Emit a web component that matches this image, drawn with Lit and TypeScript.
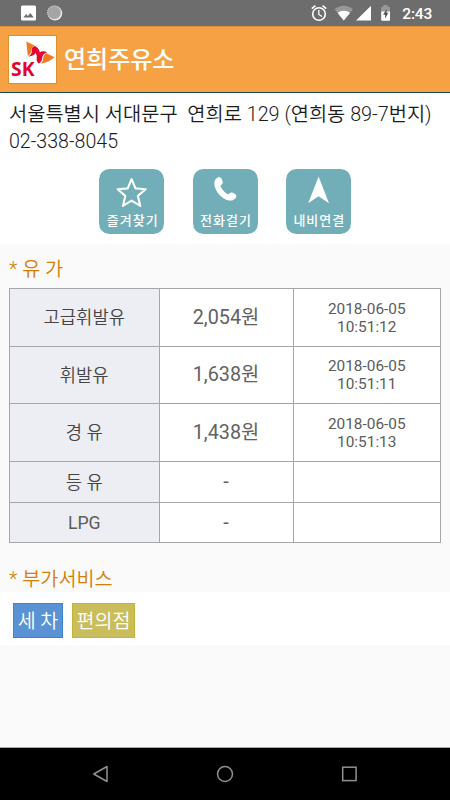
import { LitElement, html, css, svg, nothing } from "lit";
import { customElement, property } from "lit/decorators.js";

const fontStack = css`Roboto, "Noto Sans CJK KR", sans-serif`;

@customElement("status-bar")
class StatusBar extends LitElement {
  static styles = css`
    :host { display: block; height: 26px; flex: none; background: #6d6d6d; }
    svg { display: block; }
    .time { font: 500 15.5px ${fontStack}; fill: #fff; }
  `;
  render() {
    return html`<svg width="450" height="26" viewBox="0 0 450 26">
      <path fill="#fff" fill-rule="evenodd" d="M22.5 5.5h12a1.5 1.5 0 0 1 1.5 1.5v12a1.5 1.5 0 0 1-1.5 1.5h-12A1.5 1.5 0 0 1 21 19V7a1.5 1.5 0 0 1 1.5-1.5zM23.5 17.4h10.2l-3.3-4.5-2.6 3.2-1.7-2z"/>
      <circle cx="55" cy="13.3" r="7.2" fill="#f4f4f4"/>
      <circle cx="54.2" cy="12.5" r="6.8" fill="#a5a5a5"/>
      <circle cx="54.2" cy="12.5" r="6.6" fill="none" stroke="#c9c9c9" stroke-width="1.2" stroke-dasharray="1 1"/>
      <g fill="none" stroke="#fff" stroke-width="1.6">
        <circle cx="319" cy="14" r="6.3"/>
        <path stroke-width="1.3" d="M318.8 10v4.5l3.2 2"/>
        <path d="M311.8 8.6l3.6-3M326.2 8.6l-3.6-3"/>
      </g>
      <path fill="#989898" d="M334.6 9.2C337 7 340.2 5.8 343.8 5.8s6.800 1.200 9.200 3.400L343.800 20.600z"/>
      <path fill="#fff" d="M337.6 12.9c1.7-1.3 3.8-2.1 6.2-2.1s4.5.8 6.2 2.1l-6.2 7.7z"/>
      <path fill="#fff" d="M371 5.8v14.8h-15z"/>
      <path fill="#989898" d="M381.2 6.8h2.2V5h4.2v1.8h2.4V12h-8.8z"/>
      <path fill="#fff" d="M381.2 11.6h8.8v8q0 1.2-1 1.2h-6.8q-1 0-1-1.2z"/>
      <path fill="#555" d="M386.6 9l-3.5 5.8h2v3.6l3.3-5.6h-1.8z"/>
      <text class="time" x="402.3" y="19" textLength="30">2:43</text>
    </svg>`;
  }
}

@customElement("station-header")
class StationHeader extends LitElement {
  @property() name = "";
  static styles = css`
    :host {
      display: flex; align-items: center; box-sizing: border-box; flex: none;
      height: 67px; padding: 0 8px; gap: 7px;
      background: #f6a244; border-bottom: 1px solid #17484c; border-top: 1px solid #e0913a;
    }
    .logo { display: block; flex: none; width: 49px; height: 49px; }
    .brand { font: 700 19.5px "Open Sans", "Noto Sans", sans-serif; fill: #e4032e; }
    h1 { margin: 0; font: 500 24px/36px ${fontStack}; color: #fff; }
  `;
  render() {
    return html`
      <svg class="logo" viewBox="0 0 49 49">
        <rect x=".5" y=".5" width="48" height="48" fill="#fff" stroke="#d8912c"/>
        <path fill="#f47920" d="M18.3 6.6L27 10.8C24.200 11.600 23.200 13.400 23.200 15.500 23.200 17.600 22.200 19.200 19.800 21z"/>
        <path fill="#e4032e" d="M27 10.900C29.600 12.400 31.200 14.300 31.800 17.200 33.800 15.900 36.700 15.900 39 17.400 35.600 18.500 34.400 20.300 34.200 23 34 25.600 33 27.400 30.900 28.600 29 27 28.300 25.200 28.700 22.900 29 20.900 28.600 19.300 27.400 18 26.700 20 24.600 21.100 20.600 21.400 23.300 19.400 24.100 17.600 23.700 15.300 23.400 13.100 24.600 11.500 27 10.900z"/>
        <path fill="#f47920" d="M38.400 18.200L46.500 22.200C42.800 25.700 38.200 27.800 32.600 28.700 34.400 27.400 35.200 25.600 35.300 23.300 35.400 20.900 36.300 19.200 38.400 18.200z"/>
        <text class="brand" x="3" y="41" textLength="23.5" lengthAdjust="spacingAndGlyphs">SK</text>
      </svg>
      <h1>${this.name}</h1>`;
  }
}

const actionIcons: Record<string, unknown> = {
  star: svg`<path fill="none" stroke="#fff" stroke-width="2.1" stroke-linejoin="round" d="M32.6 10.2l3.9 9.2 10.1.9-7.700 6.600 2.400 10-8.700-5.300-8.700 5.300 2.400-10-7.700-6.600 10.100-.9z"/>`,
  phone: svg`<path fill="#fff" d="M24.800 8.400c1.700-.9 3.200.1 4.300 2.500 1 2.300.8 3.700-.8 4.900-.8.6-.9 1.200-.4 2.200 1.300 2.800 3.500 5.200 6.100 6.800 1.100.7 1.600.6 2.400-.2 1.400-1.400 3-1.400 5 0 2.100 1.500 2.500 2.900 1.300 4.400-2.400 2.900-6.200 3.500-10.900.9-4.600-2.500-8.300-6.900-9.800-11.700-1.400-4.600-.4-8.200 2.800-9.800z"/>`,
  navigate: svg`<path fill="#fff" d="M32.6 7.5L43 34.3l-10.400-7-10.400 7z"/>`,
};

@customElement("action-button")
class ActionButton extends LitElement {
  @property() icon = "";
  @property() label = "";
  static styles = css`
    :host { display: block; width: 65px; height: 65px; }
    button {
      display: flex; flex-direction: column; align-items: center; width: 65px; height: 65px;
      margin: 0; padding: 0; border: 0; border-radius: 10.5px; background: #72aeb8; color: #fff;
    }
    svg { display: block; flex: none; }
    span { font: 500 13px/19px ${fontStack}; letter-spacing: 1px; white-space: nowrap; margin: 1px -2px 0 0; }
  `;
  render() {
    return html`<button>
      <svg width="65" height="41" viewBox="0 0 65 41">${actionIcons[this.icon] ?? nothing}</svg>
      <span>${this.label}</span>
    </button>`;
  }
}

interface Price { fuel: string; price: string; date?: string; time?: string; }

const prices: Price[] = [
  { fuel: "고급휘발유", price: "2,054원", date: "2018-06-05", time: "10:51:12" },
  { fuel: "휘발유", price: "1,638원", date: "2018-06-05", time: "10:51:11" },
  { fuel: "경 유", price: "1,438원", date: "2018-06-05", time: "10:51:13" },
  { fuel: "등 유", price: "-" },
  { fuel: "LPG", price: "-" },
];

@customElement("price-table")
class PriceTable extends LitElement {
  static styles = css`
    :host {
      display: grid; box-sizing: border-box; width: 432px; height: 255px;
      grid-template-columns: 148.5px 133px 1fr;
      grid-template-rows: 56.5px 56.5px 56.5px 40px 1fr;
      gap: 1px; padding: 1px; background: #a6a6a6;
    }
    div { display: flex; align-items: center; justify-content: center; background: #fff; }
    .fuel { background: #edeef3; font: 350 17.7px/24px ${fontStack}; color: #444; padding-top: 2px; }
    .latin { font-weight: 400; color: #5c5c5c; }
    .price { font: 400 19.8px/26px ${fontStack}; color: #626262; padding-top: 1px; }
    .when { font: 400 15.4px/18px ${fontStack}; color: #5c5c5c; text-align: center; padding-top: 1px; }
  `;
  render() {
    return prices.map((p) => html`
      <div class="fuel ${/^[A-Z]+$/.test(p.fuel) ? "latin" : ""}">${p.fuel}</div>
      <div class="price">${p.price}</div>
      <div class="when">${p.date ? html`<span>${p.date}<br>${p.time}</span>` : nothing}</div>`);
  }
}

@customElement("nav-bar")
class NavBar extends LitElement {
  static styles = css`
    :host { display: block; flex: none; height: 52px; background: #000; border-top: 1px solid #aaa; }
    svg { display: block; }
  `;
  render() {
    return html`<svg width="450" height="52" viewBox="0 0 450 52" fill="none" stroke="#909090" stroke-width="1.5">
      <path stroke-linejoin="round" d="M107 18.5v15L93.8 26z"/>
      <circle cx="225" cy="26" r="7.5"/>
      <rect x="342.7" y="19.2" width="13.4" height="13.4"/>
    </svg>`;
  }
}

@customElement("app-root")
class AppRoot extends LitElement {
  static styles = css`
    :host {
      display: flex; flex-direction: column; width: 450px; height: 800px; overflow: hidden;
      background: #fafafa; font-family: ${fontStack}; font-weight: 350;
    }
    .info { box-sizing: border-box; height: 151px; flex: none; background: #fff; padding: 8px 9px 0; }
    .info p { margin: 0; font-size: 19.6px; line-height: 27px; color: #1c1c1c; white-space: pre; }
    .info .address { font-size: 19.8px; }
    .actions { display: flex; justify-content: center; gap: 28.3px; margin: 14px 0 0 0; }
    h2 { margin: 0; font-size: 19.7px; line-height: 28px; font-weight: 350; color: #d57e08; padding-left: 9px; }
    .fuel-title { margin-top: 12px; }
    price-table { margin: 4px 0 0 9px; flex: none; }
    .service-title { margin-top: 23px; }
    .services { box-sizing: border-box; height: 53px; flex: none; background: #fff; margin-top: -2px; padding: 11px 13px; display: flex; gap: 9px; }
    .tag { box-sizing: border-box; height: 35px; border: 1px solid; color: #fff; font-size: 19.5px; line-height: 36px; text-align: center; }
    .wash { width: 50px; background: #5993d3; border-color: #3d84cb; }
    .store { width: 63px; background: #cabd5b; border-color: #c4b42f; }
    nav-bar { margin-top: auto; }
  `;
  render() {
    return html`
      <status-bar></status-bar>
      <station-header name="연희주유소"></station-header>
      <section class="info">
        <p class="address">서울특별시 서대문구  연희로 129 (연희동 89-7번지)</p>
        <p>02-338-8045</p>
        <div class="actions">
          <action-button icon="star" label="즐겨찾기"></action-button>
          <action-button icon="phone" label="전화걸기"></action-button>
          <action-button icon="navigate" label="내비연결"></action-button>
        </div>
      </section>
      <h2 class="fuel-title">* 유 가</h2>
      <price-table></price-table>
      <h2 class="service-title">* 부가서비스</h2>
      <section class="services">
        <div class="tag wash">세 차</div>
        <div class="tag store">편의점</div>
      </section>
      <nav-bar></nav-bar>`;
  }
}
